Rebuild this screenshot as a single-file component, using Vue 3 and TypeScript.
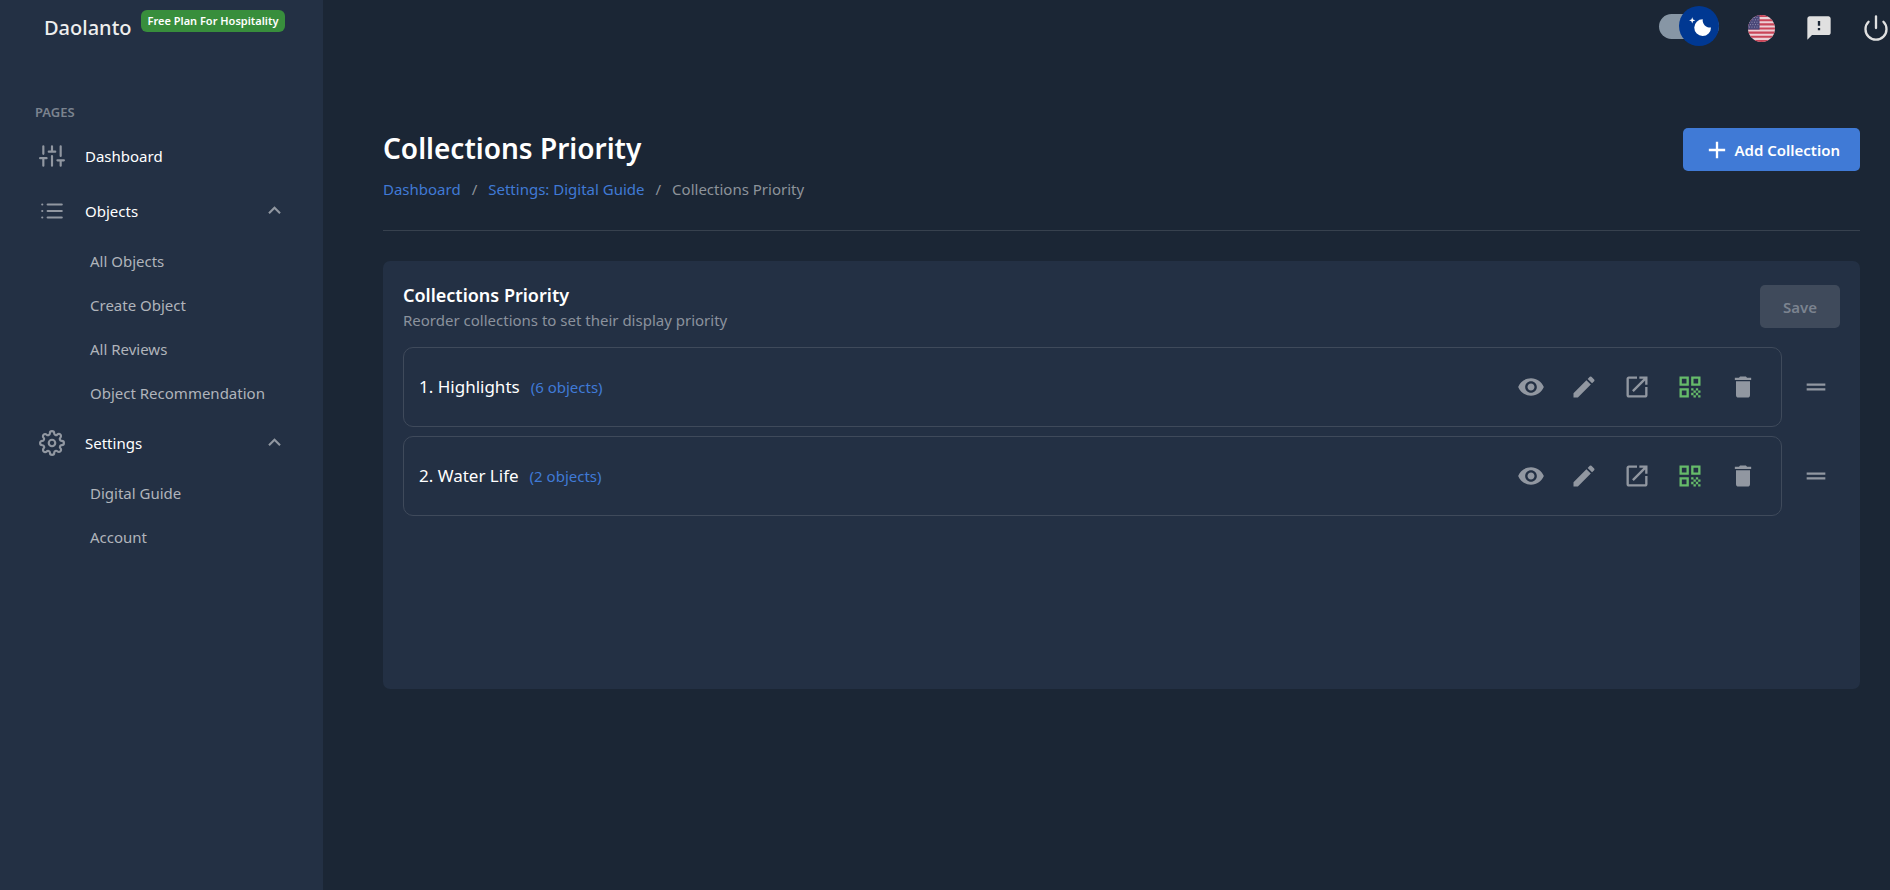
<script setup lang="ts">
import { ref } from 'vue'

interface NavGroup {
  label: string
  icon: 'sliders' | 'list' | 'settings'
  children: string[]
}

interface Collection {
  name: string
  count: number
}

const darkMode = ref(true)

const groups = ref<NavGroup[]>([
  { label: 'Dashboard', icon: 'sliders', children: [] },
  {
    label: 'Objects',
    icon: 'list',
    children: ['All Objects', 'Create Object', 'All Reviews', 'Object Recommendation'],
  },
  { label: 'Settings', icon: 'settings', children: ['Digital Guide', 'Account'] },
])

const collections = ref<Collection[]>([
  { name: 'Highlights', count: 6 },
  { name: 'Water Life', count: 2 },
])

const actions = [
  {
    label: 'View',
    tone: 'muted',
    path: 'M12 4.5C7 4.5 2.73 7.61 1 12c1.73 4.39 6 7.5 11 7.5s9.27-3.11 11-7.5c-1.73-4.39-6-7.5-11-7.5M12 17c-2.76 0-5-2.24-5-5s2.24-5 5-5 5 2.24 5 5-2.24 5-5 5m0-8c-1.66 0-3 1.34-3 3s1.34 3 3 3 3-1.34 3-3-1.34-3-3-3',
  },
  {
    label: 'Edit',
    tone: 'muted',
    path: 'M3 17.25V21h3.75L17.81 9.94l-3.75-3.75zM20.71 7.04c.39-.39.39-1.02 0-1.41l-2.34-2.34a.996.996 0 0 0-1.41 0l-1.83 1.83 3.75 3.75z',
  },
  {
    label: 'Open',
    tone: 'muted',
    path: 'M19 19H5V5h7V3H5c-1.11 0-2 .9-2 2v14c0 1.1.89 2 2 2h14c1.1 0 2-.9 2-2v-7h-2zM14 3v2h3.59l-9.83 9.83 1.41 1.41L19 6.41V10h2V3z',
  },
  {
    label: 'QR code',
    tone: 'green',
    path: 'M3 11h8V3H3zm2-6h4v4H5zM3 21h8v-8H3zm2-6h4v4H5zM13 3v8h8V3zm6 6h-4V5h4zM19 19h2v2h-2zM13 13h2v2h-2zM15 15h2v2h-2zM13 17h2v2h-2zM15 19h2v2h-2zM17 17h2v2h-2zM17 13h2v2h-2zM19 15h2v2h-2z',
  },
  {
    label: 'Delete',
    tone: 'muted',
    path: 'M6 19c0 1.1.9 2 2 2h8c1.1 0 2-.9 2-2V7H6zM19 4h-3.5l-1-1h-5l-1 1H5v2h14z',
  },
]
</script>

<template>
  <div class="app">
    <aside class="sidebar">
      <header class="brand">
        <span class="brand-name">Daolanto</span>
        <span class="plan">Free Plan For Hospitality</span>
      </header>
      <nav class="nav">
        <h2 class="nav-title">PAGES</h2>
        <div v-for="group in groups" :key="group.label" class="nav-group">
          <button class="nav-item" type="button">
            <svg class="nav-icon" viewBox="0 0 24 24" aria-hidden="true">
              <path
                v-if="group.icon === 'sliders'"
                d="M4 21v-7M4 10V3M12 21v-9M12 8V3M20 21v-5M20 12V3M1 14h6M9 8h6M17 16h6"
              />
              <path
                v-else-if="group.icon === 'list'"
                d="M8 6h13M8 12h13M8 18h13M3 6h.01M3 12h.01M3 18h.01"
              />
              <template v-else>
                <circle cx="12" cy="12" r="3" />
                <path
                  d="M19.4 15a1.65 1.65 0 0 0 .33 1.82l.06.06a2 2 0 0 1 0 2.83 2 2 0 0 1-2.83 0l-.06-.06a1.65 1.65 0 0 0-1.82-.33 1.65 1.65 0 0 0-1 1.51V21a2 2 0 0 1-2 2 2 2 0 0 1-2-2v-.09A1.65 1.65 0 0 0 9 19.4a1.65 1.65 0 0 0-1.82.33l-.06.06a2 2 0 0 1-2.83 0 2 2 0 0 1 0-2.83l.06-.06a1.65 1.65 0 0 0 .33-1.82 1.65 1.65 0 0 0-1.51-1H3a2 2 0 0 1-2-2 2 2 0 0 1 2-2h.09A1.65 1.65 0 0 0 4.6 9a1.65 1.65 0 0 0-.33-1.82l-.06-.06a2 2 0 0 1 0-2.83 2 2 0 0 1 2.83 0l.06.06a1.65 1.65 0 0 0 1.82.33H9a1.65 1.65 0 0 0 1-1.51V3a2 2 0 0 1 2-2 2 2 0 0 1 2 2v.09a1.65 1.65 0 0 0 1 1.51 1.65 1.65 0 0 0 1.82-.33l.06-.06a2 2 0 0 1 2.83 0 2 2 0 0 1 0 2.83l-.06.06a1.65 1.65 0 0 0-.33 1.82V9a1.65 1.65 0 0 0 1.51 1H21a2 2 0 0 1 2 2 2 2 0 0 1-2 2h-.09a1.65 1.65 0 0 0-1.51 1z"
                />
              </template>
            </svg>
            <span class="nav-label">{{ group.label }}</span>
            <svg v-if="group.children.length" class="chevron" viewBox="0 0 24 24" aria-hidden="true">
              <path d="m12 8-6 6 1.41 1.41L12 10.83l4.59 4.58L18 14z" />
            </svg>
          </button>
          <div v-if="group.children.length" class="nav-children">
            <a v-for="child in group.children" :key="child" class="nav-sub" href="#">{{ child }}</a>
          </div>
        </div>
      </nav>
    </aside>

    <div class="page">
      <header class="topbar">
        <label class="theme-switch">
          <input v-model="darkMode" type="checkbox" aria-label="Dark mode" />
          <span class="track"></span>
          <span class="thumb">
            <svg viewBox="0 0 20 20" aria-hidden="true">
              <path
                d="M4.2 2.5l-.7 1.8-1.8.7 1.8.7.7 1.8.6-1.8L6.7 5l-1.9-.7-.6-1.8zm15 8.3a6.7 6.7 0 11-6.6-6.6 5.8 5.8 0 006.6 6.6z"
              />
            </svg>
          </span>
        </label>
        <button class="top-button" type="button" aria-label="Language">
          <svg class="flag" viewBox="0 0 28 28" aria-hidden="true">
            <defs>
              <clipPath id="flag-round"><circle cx="14" cy="14" r="14" /></clipPath>
            </defs>
            <g clip-path="url(#flag-round)">
              <rect width="28" height="28" fill="#ecd0d6" />
              <path
                d="M0 1.1h28M0 5.4h28M0 9.7h28M0 14h28M0 18.3h28M0 22.6h28M0 26.9h28"
                stroke="#c94558"
                stroke-width="2.15"
              />
              <rect width="12" height="15.1" fill="#4a4778" />
              <path
                d="M1 2.5h11M2 5h10M1 7.5h11M2 10h10M1 12.5h11"
                stroke="#9a98b8"
                stroke-dasharray="1 1.6"
              />
            </g>
          </svg>
        </button>
        <button class="top-button" type="button" aria-label="Feedback">
          <svg class="top-icon solid" viewBox="0 0 24 24" aria-hidden="true">
            <path
              d="M20 2H4c-1.1 0-1.99.9-1.99 2L2 22l4-4h14c1.1 0 2-.9 2-2V4c0-1.1-.9-2-2-2m-7 12h-2v-2h2zm0-4h-2V6h2z"
            />
          </svg>
        </button>
        <button class="top-button last" type="button" aria-label="Sign out">
          <svg class="top-icon" viewBox="0 0 24 24" aria-hidden="true">
            <path d="M18.36 6.64a9 9 0 1 1-12.73 0M12 2v10" />
          </svg>
        </button>
      </header>

      <main class="content">
        <div class="heading">
          <div>
            <h1>Collections Priority</h1>
            <nav class="crumbs" aria-label="Breadcrumb">
              <a href="#">Dashboard</a>
              <span>/</span>
              <a href="#">Settings: Digital Guide</a>
              <span>/</span>
              <span>Collections Priority</span>
            </nav>
          </div>
          <button class="button primary" type="button">
            <svg viewBox="0 0 24 24" aria-hidden="true"><path d="M19 13h-6v6h-2v-6H5v-2h6V5h2v6h6z" /></svg>
            <span>Add Collection</span>
          </button>
        </div>

        <section class="card">
          <div class="card-head">
            <div>
              <h2>Collections Priority</h2>
              <p>Reorder collections to set their display priority</p>
            </div>
            <button class="button save" type="button" disabled>Save</button>
          </div>
          <ul class="rows">
            <li v-for="(item, index) in collections" :key="item.name" class="row">
              <div class="row-box">
                <span class="row-name">{{ index + 1 }}. {{ item.name }}</span>
                <a class="row-count" href="#">({{ item.count }} objects)</a>
                <div class="row-actions">
                  <button
                    v-for="action in actions"
                    :key="action.label"
                    type="button"
                    class="icon-button"
                    :class="action.tone"
                    :aria-label="action.label"
                  >
                    <svg viewBox="0 0 24 24" aria-hidden="true"><path :d="action.path" /></svg>
                  </button>
                </div>
              </div>
              <button class="icon-button drag muted" type="button" aria-label="Reorder">
                <svg viewBox="0 0 24 24" aria-hidden="true"><path d="M20 9H4v2h16zM4 15h16v-2H4z" /></svg>
              </button>
            </li>
          </ul>
        </section>
      </main>
    </div>
  </div>
</template>

<style>
body {
  margin: 0;
  background: #1b2635;
}
</style>

<style scoped>
.app {
  display: flex;
  min-height: 100vh;
  background: #1b2635;
  color: #fff;
  font-family: 'Noto Sans', 'Open Sans', sans-serif;
  font-size: 15px;
  line-height: 22px;
}

button {
  border: 0;
  padding: 0;
  background: none;
  color: inherit;
  font: inherit;
  cursor: pointer;
}

a {
  text-decoration: none;
}

.sidebar {
  flex: none;
  width: 323px;
  background: #233044;
}

.brand {
  display: flex;
  align-items: flex-start;
  gap: 9px;
  height: 86px;
  padding: 10px 0 0 44px;
  box-sizing: border-box;
}

.brand-name {
  color: #eeeeee;
  font-size: 20px;
  font-weight: 500;
  line-height: 36px;
}

.plan {
  padding: 0 7px;
  border-radius: 6px;
  background: #388e3c;
  font-size: 11px;
  font-weight: 600;
  line-height: 22px;
}

.nav-title {
  margin: 0;
  padding: 15px 35px 5px;
  color: #7b838f;
  font-size: 13px;
  font-weight: 600;
  line-height: 22px;
}

.nav-item {
  display: flex;
  align-items: center;
  width: 100%;
  height: 55px;
  padding: 0 36px 0 39px;
  text-align: left;
}

.nav-icon {
  width: 26px;
  height: 26px;
  fill: none;
  stroke: #9197a1;
  stroke-width: 2;
  stroke-linecap: round;
  stroke-linejoin: round;
}

.nav-label {
  flex: 1;
  padding-left: 20px;
}

.chevron {
  width: 25px;
  height: 25px;
  fill: #9197a1;
}

.nav-children {
  display: flex;
  flex-direction: column;
  padding-top: 1px;
}

.nav-sub {
  padding-left: 90px;
  color: #b0b4bb;
  line-height: 44px;
}

.page {
  flex: 1;
  min-width: 0;
}

.topbar {
  display: flex;
  align-items: center;
  justify-content: flex-end;
  height: 56px;
  box-sizing: border-box;
}

.theme-switch {
  position: relative;
  display: flex;
  align-items: center;
  width: 60px;
  height: 40px;
  margin: 0 14px 4px 0;
}

.theme-switch input {
  position: absolute;
  inset: 0;
  margin: 0;
  opacity: 0;
}

.track {
  width: 60px;
  height: 25px;
  border-radius: 13px;
  background: #8796a5;
}

.thumb {
  position: absolute;
  top: 0;
  right: 0;
  display: grid;
  place-items: center;
  width: 40px;
  height: 40px;
  border-radius: 50%;
  background: #003892;
}

.thumb svg {
  width: 25px;
  height: 25px;
  fill: #fff;
}

.top-button {
  display: grid;
  place-items: center;
  width: 57px;
  height: 56px;
}

.top-button.last {
  width: 43px;
  justify-items: end;
}

.flag {
  width: 27px;
  height: 27px;
}

.top-icon {
  width: 28px;
  height: 28px;
  fill: none;
  stroke: #e0e0e0;
  stroke-width: 2;
  stroke-linecap: round;
  stroke-linejoin: round;
}

.top-icon.solid {
  fill: #e0e0e0;
  stroke: none;
}

.content {
  padding: 72px 30px 48px 60px;
}

.heading {
  display: flex;
  align-items: flex-start;
  justify-content: space-between;
  height: 102px;
  border-bottom: 1px solid #37414e;
}

h1 {
  margin: 0;
  font-size: 28px;
  font-weight: 600;
  line-height: 40px;
}

.crumbs {
  display: flex;
  gap: 11px;
  margin-top: 10px;
  color: #8d939a;
}

.crumbs a,
.row-count {
  color: #407ad6;
}

.button {
  display: flex;
  align-items: center;
  justify-content: center;
  height: 43px;
  border-radius: 5px;
  font-weight: 600;
}

.primary {
  gap: 3px;
  padding: 0 20px;
  background: #407ad6;
}

.primary svg {
  width: 28px;
  height: 28px;
  fill: #fff;
}

.card {
  min-height: 428px;
  margin-top: 30px;
  padding: 20px;
  box-sizing: border-box;
  border-radius: 7px;
  background: #233044;
}

.card-head {
  display: flex;
  align-items: flex-start;
  justify-content: space-between;
  height: 56px;
  margin-bottom: 10px;
}

.card-head h2 {
  margin: 0;
  font-size: 18px;
  font-weight: 600;
  line-height: 28px;
}

.card-head p {
  margin: 0;
  color: #8b929d;
}

.save {
  width: 80px;
  margin-top: 4px;
  background: #3f4a5b;
  color: #7b838f;
}

.rows {
  display: flex;
  flex-direction: column;
  gap: 9px;
  margin: 0;
  padding: 0;
  list-style: none;
}

.row {
  display: flex;
  align-items: center;
}

.row-box {
  display: flex;
  flex: 1;
  align-items: center;
  height: 80px;
  padding: 0 12px 0 15px;
  box-sizing: border-box;
  border: 1px solid #3f4a5b;
  border-radius: 10px;
}

.row-name {
  font-size: 17px;
}

.row-count {
  margin-left: 11px;
}

.row-actions {
  display: flex;
  margin-left: auto;
}

.icon-button {
  display: grid;
  place-items: center;
  width: 53px;
  height: 53px;
}

.icon-button svg {
  width: 28px;
  height: 28px;
}

.muted {
  fill: #9197a1;
}

.green {
  fill: #66bb6a;
}

.drag {
  width: 58px;
  padding-left: 10px;
}
</style>
